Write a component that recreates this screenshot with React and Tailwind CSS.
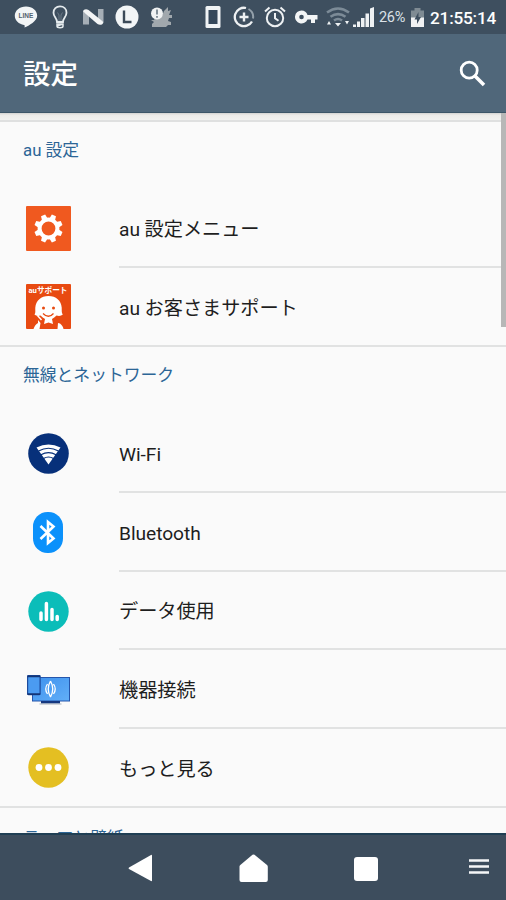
import React from 'react';

const TEETH = [0, 45, 90, 135, 180, 225, 270, 315];

function StatusBar() {
  return (
    <div className="flex h-[34px] shrink-0 items-center bg-[#3e4f5f] pl-[14px] text-white">
      {/* Notifications */}
      <svg className="h-[24px] w-[24px] shrink-0" viewBox="0 0 24 24">
        <path d="M12 1.5C5.6 1.5.8 5.6.8 10.8c0 4.8 4 8.300 9.200 9.100 1 .2.7 1.500.5 2.600 4.500-1.700 12.700-6.500 12.700-11.700 0-5.200-4.800-9.300-11.200-9.300Z" fill="#f2f5f6" />
        <text x="12" y="13.300" textAnchor="middle" fontSize="6.500" fontWeight="700" fontFamily="Liberation Sans" fill="#52616e">LINE</text>
      </svg>
      <svg className="ml-[13px] h-[24px] w-[18px] shrink-0" viewBox="0 0 18 24" fill="none" stroke="#e4eaed" strokeWidth="1.800">
        <path d="M6 17c0-4-3.500-5-3.500-9.300C2.500 4 5.200 1.300 9 1.300s6.500 2.700 6.500 6.400C15.500 12 12 13 12 17Z" />
        <path d="M6.500 7.500 8 10v6M11.500 7.500 10 10v6" strokeWidth=".7" stroke="#7e8d99" />
        <path d="M6 19h6v2.200c0 1-1.500 1.500-3 1.500s-3-.5-3-1.500ZM6 21l6-2" strokeWidth="1.500" />
      </svg>
      <svg className="ml-[13px] h-[18px] w-[23px] shrink-0" viewBox="0 0 23 18">
        <path d="M1 3.500 7 7v9.500H1ZM16 1h5.500v13L16 11Z" fill="#a5aeb6" />
        <path d="M1 3.500C1.500 1 4.500.500 6.500 2L21.500 14c-.5 3-4 3.500-6 2Z" fill="#f3f5f6" />
      </svg>
      <svg className="ml-[10px] h-[24px] w-[24px] shrink-0" viewBox="0 0 24 24">
        <circle cx="12" cy="12" r="11.500" fill="#f2f5f6" />
        <path d="M9 5.500v11.500h7.500" fill="none" stroke="#3b4a58" strokeWidth="2.400" />
      </svg>
      <svg className="ml-[11px] h-[24px] w-[23px] shrink-0" viewBox="0 0 23 24">
        <path d="M1 15h3l2-4h6l2-5 4-4v4l3-1-2 5h3v3h-3l-1 3 3 1v3h-3l-2 2H2v-3l2-2Z" fill="#a1a8ad" />
        <circle cx="7" cy="8.500" r="6" fill="#f0f2f3" />
        <path d="M7 4.500v5M7 11v1.800" stroke="#778590" strokeWidth="1.800" />
      </svg>

      {/* System icons */}
      <svg className="ml-[32px] h-[22px] w-[16px] shrink-0" viewBox="0 0 16 22">
        <rect x=".5" width="15" height="22" rx="1.500" fill="#f0f3f5" />
        <rect x="3.500" y="4" width="9" height="14" fill="#34475a" />
      </svg>
      <svg className="ml-[12px] h-[22px] w-[22px] shrink-0" viewBox="0 0 22 22" fill="none" stroke="#eef1f3">
        <path d="M13 2A9.200 9.200 0 1 0 19 15.500" strokeWidth="2.300" />
        <path d="M15.500 3A9.200 9.200 0 0 1 20 12.500" strokeWidth="2" stroke="#93a0aa" />
        <path d="M11 6.500v9M6.500 11h9" strokeWidth="2.400" />
      </svg>
      <svg className="ml-[9px] h-[22px] w-[22px] shrink-0" viewBox="0 0 22 22" fill="none" stroke="#eef1f3" strokeWidth="2">
        <circle cx="11" cy="12" r="8.200" />
        <path d="M11 7v5.200l3.500 2.500M1 5.500l4.500-4M21 5.500l-4.500-4" />
      </svg>
      <svg className="ml-[9px] h-[14px] w-[23px] shrink-0" viewBox="0 0 23 14" fill="#f3f5f6">
        <path fillRule="evenodd" d="M6.500.500a6.500 6.500 0 1 0 6 9H16v3.500h4V9.500h2.500V5H12.500a6.500 6.500 0 0 0-6-4.500Zm0 4.200a2.300 2.300 0 1 1 0 4.600 2.300 2.300 0 0 1 0-4.600Z" />
      </svg>
      <svg className="ml-[8px] h-[20px] w-[24px] shrink-0" viewBox="0 0 24 20" fill="none">
        <path d="M1 5.500q11-8 22 0M4.500 9.800q7.500-5.500 15 0M8 13.500q4-3 8 0" stroke="#7c8b97" strokeWidth="2.600" />
        <path d="m9 16 3 3.500 3-3.500ZM1 17.500h4L3 14ZM19 14h4l-2 3.500Z" fill="#eef1f3" />
      </svg>
      <svg className="ml-[3px] h-[20px] w-[22px] shrink-0" viewBox="0 0 22 20" fill="#eef1f3">
        <path d="M0 17.500h3V20H0ZM4 14.500h3V20H4ZM8 11h3.500v9H8ZM12.500 6.500H16V20h-3.500ZM17 1.500l4-1.500v20h-4Z" />
      </svg>
      <span className="mt-px ml-[4px] w-[31px] shrink-0 whitespace-nowrap text-[14.500px] tracking-[-0.300px] text-[#dbe2e7]">26%</span>
      <svg className="h-[21px] w-[15px] shrink-0" viewBox="0 0 15 21">
        <path d="M1 3.500h3.500V1h6v2.500H14V11H1Z" fill="#7f8b93" />
        <path d="M1 10.500h13V20H1Z" fill="#f1f2f3" />
        <path d="m8.500 5-4 7.500H7V17l4-7H8.500Z" fill="#3e4f5f" />
      </svg>
      <span className="mt-[3px] ml-[5px] whitespace-nowrap text-[17.200px] font-medium tracking-[-0.200px]">21:55:14</span>
    </div>
  );
}

function Header() {
  return (
    <header className="flex h-[79px] shrink-0 items-center justify-between border-b border-[#3c5567] bg-[#50677a] pr-[20px] pl-[23px] text-white">
      <h1 className="pt-[4px] text-[27.500px] leading-none font-medium">設定</h1>
      <svg className="h-[27px] w-[27px]" viewBox="0 0 27 27" fill="none" stroke="white">
        <circle cx="10.200" cy="10.200" r="8" strokeWidth="2.800" />
        <path d="m16 16 9 9" strokeWidth="3.500" />
      </svg>
    </header>
  );
}

function GearIcon() {
  return (
    <svg className="h-[45px] w-[45px]" viewBox="0 0 45 45">
      <rect width="45" height="45" rx="1" fill="#f0591f" />
      <g fill="white">
        {TEETH.map((a) => (
          <path key={a} d="m19.500 13 .8-4.700h4.400l.8 4.700Z" transform={`rotate(${a + 22.5} 22.5 22.5)`} />
        ))}
      </g>
      <circle cx="22.500" cy="22.500" r="8.900" fill="none" stroke="white" strokeWidth="4" />
    </svg>
  );
}

function SupportIcon() {
  return (
    <svg className="h-[45px] w-[45px]" viewBox="0 0 45 45">
      <rect width="45" height="45" rx="1" fill="#e84a11" />
      <text x="2.500" y="9" fontSize="8" fontWeight="700" textLength="39" lengthAdjust="spacingAndGlyphs" fill="white" fontFamily="Roboto, 'Noto Sans CJK JP', sans-serif">auサポート</text>
      <path d="M8.500 30.500c1.500-2 .5-4.500.8-7C10 16.500 15 12 22.500 12s12.700 4.500 13.200 11.500c.2 2.500-.4 5 1.100 7-1.500 1.500-4 1.700-6.300 1-1.500 1.500-3 2.700-4.500 3.500l1 5-4.500-1.500L18 40l1-5c-1.500-.8-3-2-4.500-3.500-2.500.7-4.500.5-6-1Z" fill="white" />
      <path d="M7.500 45c1-3 2.500-5 4.500-6v-3l2.500 3-1 6ZM31.500 45l.5-6 2 .5c2 1.500 3 3 3.500 5.500Z" fill="white" />
      <path d="m11.500 31.500 4 4.500" stroke="white" strokeWidth="1.500" />
      <circle cx="17.500" cy="24" r="1.500" fill="#e84a11" />
      <circle cx="27.500" cy="24" r="1.500" fill="#e84a11" />
      <path d="M17 29.500q5.500 5.500 10.500 0" fill="none" stroke="#e84a11" strokeWidth="1.300" />
    </svg>
  );
}

function WifiIcon() {
  return (
    <svg className="h-[41px] w-[41px]" viewBox="0 0 41 41">
      <circle cx="20.500" cy="20.500" r="20.300" fill="#07307a" />
      <path d="M8.500 14.500Q20.500 8.500 32.500 14.500L20.500 31.500Z" fill="white" />
      <path d="M10.500 18q10-5.500 20 0M13 21.800q7.500-4.500 15 0M15.500 25.500q5-3 10 0" fill="none" stroke="#07307a" strokeWidth="1.200" />
    </svg>
  );
}

function BluetoothIcon() {
  return (
    <svg className="h-[41px] w-[30px]" viewBox="0 0 30 41">
      <rect width="30" height="41" rx="14.500" fill="#0b91fb" />
      <path d="m7.500 14 13 12.500-5.500 4.500V10l5.500 4.500-13 12.500" fill="none" stroke="white" strokeWidth="2.600" />
    </svg>
  );
}

function DataIcon() {
  return (
    <svg className="h-[41px] w-[41px]" viewBox="0 0 41 41">
      <circle cx="20.500" cy="20.500" r="20.200" fill="#0bbdb9" />
      <path d="M13 22v6.500M18.400 12.500v16M24 18.500v10M29.200 25.500v3" stroke="white" strokeWidth="3.500" strokeLinecap="round" />
    </svg>
  );
}

function DevicesIcon() {
  return (
    <svg className="mt-[2px] h-[31px] w-[43px]" viewBox="0 0 43 31">
      <defs>
        <linearGradient id="screen" x1="0" y1="0" x2="1" y2="1">
          <stop offset="0" stopColor="#3e91ed" />
          <stop offset="1" stopColor="#62aff8" />
        </linearGradient>
      </defs>
      <rect x="5.500" y="2.500" width="37" height="23.500" fill="url(#screen)" stroke="#2455ab" />
      <path d="M14 26h19v2.500H14Z" fill="#15377f" />
      <path d="M12.500 29h22" stroke="#a9b2bc" />
      <rect x=".6" y=".6" width="12.500" height="19" rx=".8" fill="#4b9bf1" stroke="#1d4b9d" strokeWidth="1.200" />
      <path d="M.5 1.300h12.700M.5 19.200h12.700" stroke="#133476" strokeWidth="1.800" />
      <g fill="none" stroke="white" strokeWidth="1.300">
        <path d="M20.500 9q-3.500 5 0 10M26.500 9q3.500 5 0 10M23.500 6q-4.500 8 0 16M23.500 6q4.500 8 0 16" />
      </g>
    </svg>
  );
}

function MoreIcon() {
  return (
    <svg className="h-[41px] w-[41px]" viewBox="0 0 41 41">
      <circle cx="20.500" cy="20.500" r="20.200" fill="#e4bf22" />
      <g fill="white">
        <circle cx="11" cy="20.500" r="3.400" />
        <circle cx="20.500" cy="20.500" r="3.400" />
        <circle cx="30" cy="20.500" r="3.400" />
      </g>
    </svg>
  );
}

// last row of a section draws its divider over the full width
function Row({ icon, label, last }) {
  return (
    <div className={`flex h-[78.700px] shrink-0 ${last ? 'border-b-2 border-[#e1e2e2]' : ''}`}>
      <div className="flex w-[96px] shrink-0 items-center justify-center">{icon}</div>
      <div className={`ml-[23px] flex flex-1 items-center pt-[5px] text-[19.200px] tracking-[-0.050px] text-[#1e1e1e] ${last ? '' : 'border-b-2 border-[#e1e2e2]'}`}>
        {label}
      </div>
    </div>
  );
}

function SectionTitle({ children, className = 'pt-[16px]' }) {
  return (
    <h2 className={`flex h-[67.500px] shrink-0 items-start pl-[23px] text-[16.800px] leading-[24px] text-[#2c6596] ${className}`}>
      {children}
    </h2>
  );
}

function NavBar() {
  return (
    <nav className="flex h-[67px] shrink-0 items-center border-t-2 border-[#203f54] bg-[#3d4d5d] pl-[128px]">
      <svg className="mt-[2px] h-[29px] w-[25px]" viewBox="0 0 25 29">
        <path d="M1 13.500 23 1q1-.5 1 .5v25q0 1-1 .5L1 15q-1-.7 0-1.500Z" fill="white" />
      </svg>
      <svg className="mt-[2px] ml-[86px] h-[29px] w-[29px]" viewBox="0 0 29 29">
        <path d="M13.500.8q1-.8 2 0L28 11q.8.700.8 1.700V26q0 2-2 2H2.500q-2 0-2-2V12.700Q.500 11.700 1.300 11Z" fill="white" />
      </svg>
      <span className="mt-[3px] ml-[86px] h-[24px] w-[24px] rounded-[3px] bg-white" />
      <svg className="mb-[2px] ml-[91px] h-[15px] w-[20px]" viewBox="0 0 20 15">
        <path d="M0 1.500h20M0 7.500h20M0 13.500h20" stroke="#f5f6f7" strokeWidth="2.300" />
      </svg>
    </nav>
  );
}

export default function App() {
  return (
    <div className="flex h-[900px] w-[506px] flex-col overflow-hidden bg-[#fafafa] font-[Roboto,'Noto_Sans_CJK_JP',sans-serif]">
      <StatusBar />
      <Header />
      <main className="relative flex min-h-0 flex-1 flex-col overflow-hidden">
        <div className="h-[9px] shrink-0 border-b-2 border-[#dfe0e0] bg-linear-to-b from-[#d2d2d0] via-[#ecebe8] via-30% to-[#f1f1ef]" />
        <SectionTitle>au 設定</SectionTitle>
        <Row icon={<GearIcon />} label="au 設定メニュー" />
        <Row icon={<SupportIcon />} label="au お客さまサポート" last />
        <SectionTitle>無線とネットワーク</SectionTitle>
        <Row icon={<WifiIcon />} label="Wi-Fi" />
        <Row icon={<BluetoothIcon />} label="Bluetooth" />
        <Row icon={<DataIcon />} label="データ使用" />
        <Row icon={<DevicesIcon />} label="機器接続" />
        <Row icon={<MoreIcon />} label="もっと見る" last />
        <SectionTitle className="pt-[18px]">テーマと壁紙</SectionTitle>
        {/* scrollbar */}
        <div className="absolute top-0 right-0 h-[214px] w-[5px] bg-[#b7b7b7]" />
      </main>
      <NavBar />
    </div>
  );
}
